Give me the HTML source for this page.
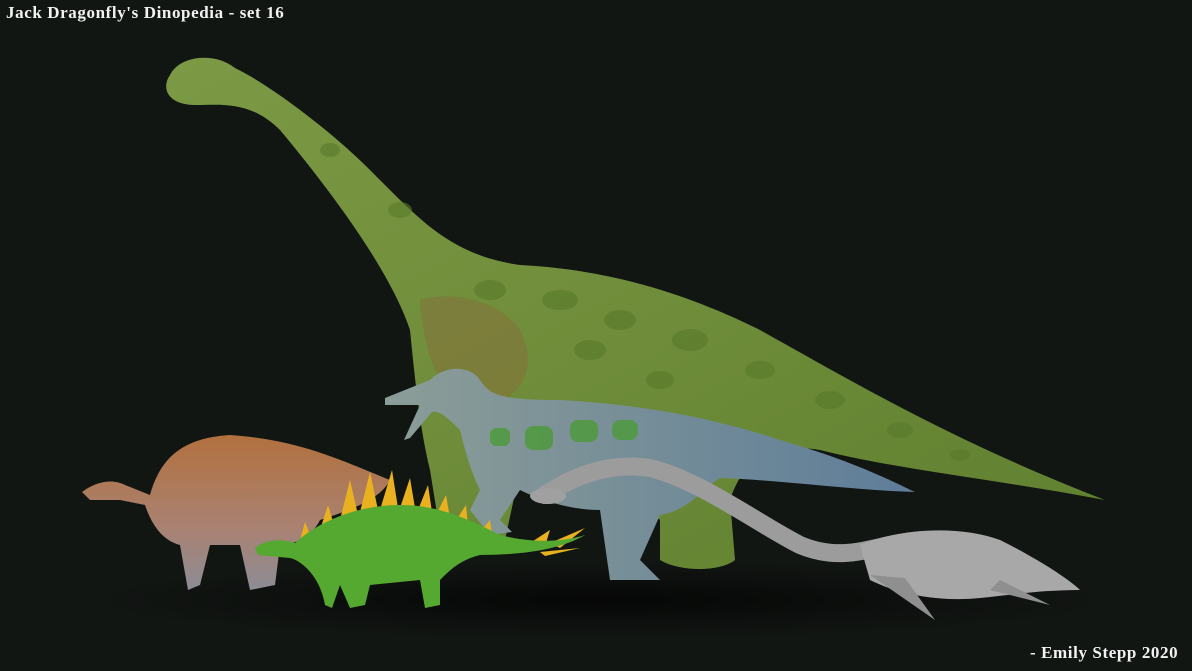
<!DOCTYPE html>
<html><head><meta charset="utf-8"><style>
html,body{margin:0;padding:0;background:#121613;width:1192px;height:671px;overflow:hidden}
svg{position:absolute;left:0;top:0}
.t{position:absolute;color:#f2f2f2;font-family:"Liberation Serif",serif;font-size:17px;letter-spacing:0.6px;font-weight:bold}
</style></head><body>
<svg width="1192" height="671" viewBox="0 0 1192 671">
<defs>
<radialGradient id="shadow" cx="0.5" cy="0.5" r="0.5"><stop offset="0" stop-color="#000" stop-opacity="0.7"/><stop offset="1" stop-color="#000" stop-opacity="0"/></radialGradient>
<linearGradient id="br" x1="0" y1="0" x2="1" y2="1"><stop offset="0" stop-color="#7c9a45"/><stop offset="0.5" stop-color="#6f8d3a"/><stop offset="1" stop-color="#5f8030"/></linearGradient>
<linearGradient id="sp" x1="0" y1="0" x2="1" y2="0"><stop offset="0" stop-color="#8c9d98"/><stop offset="1" stop-color="#5e7d99"/></linearGradient>
<linearGradient id="ou" x1="0" y1="0" x2="0" y2="1"><stop offset="0" stop-color="#b2703e"/><stop offset="0.6" stop-color="#a98272"/><stop offset="1" stop-color="#8d8c95"/></linearGradient>
</defs>
<ellipse cx="600" cy="600" rx="520" ry="40" fill="url(#shadow)"/>
<!-- brachiosaur -->
<path fill="url(#br)" d="M170,75 C180,55 215,52 235,68 C270,85 330,130 370,170 C420,220 450,255 520,265 C620,270 700,300 760,330 C850,380 950,440 1105,500 C1000,480 900,470 820,450 C760,440 740,470 730,500 L735,560 C720,572 680,572 660,560 L660,520 C640,500 600,480 560,470 L520,470 L505,540 C480,552 450,548 440,532 L430,470 C420,430 415,380 410,330 C390,270 330,190 280,130 C250,100 220,105 195,105 C170,105 160,90 170,75 Z"/>
<path fill="#8a6a3a" opacity="0.45" d="M420,300 C450,290 500,300 520,330 C540,370 520,400 480,410 C440,400 425,360 420,300Z"/>
<g fill="#587a2a" opacity="0.6">
<ellipse cx="490" cy="290" rx="16" ry="10"/><ellipse cx="560" cy="300" rx="18" ry="10"/><ellipse cx="620" cy="320" rx="16" ry="10"/><ellipse cx="690" cy="340" rx="18" ry="11"/><ellipse cx="760" cy="370" rx="15" ry="9"/><ellipse cx="830" cy="400" rx="15" ry="9"/><ellipse cx="900" cy="430" rx="13" ry="8"/><ellipse cx="960" cy="455" rx="10" ry="6"/><ellipse cx="400" cy="210" rx="12" ry="8"/><ellipse cx="330" cy="150" rx="10" ry="7"/><ellipse cx="590" cy="350" rx="16" ry="10"/><ellipse cx="660" cy="380" rx="14" ry="9"/></g>
<!-- spinosaur -->
<path fill="url(#sp)" d="M385,398 L430,380 C445,365 470,365 480,380 C490,395 500,400 560,400 C650,405 720,420 780,440 C850,460 890,480 915,492 C850,490 780,480 720,478 C700,490 690,510 660,515 L640,560 L660,580 L610,580 L600,510 C570,510 540,500 520,490 L500,520 L512,532 L490,535 L470,510 L480,490 C470,470 465,450 460,430 C450,420 440,410 432,412 L410,438 L404,440 L420,405 L385,405 Z"/>
<g fill="#4f9a3e" opacity="0.85"><rect x="490" y="428" width="20" height="18" rx="6"/><rect x="525" y="426" width="28" height="24" rx="8"/><rect x="570" y="420" width="28" height="22" rx="8"/><rect x="612" y="420" width="26" height="20" rx="8"/></g>
<!-- ouranosaurus -->
<path fill="url(#ou)" d="M82,492 C95,482 112,478 125,485 L150,495 C160,460 180,438 230,435 C300,440 340,460 390,480 C380,500 350,510 320,520 C310,540 290,545 280,545 L275,585 L250,590 L240,545 L210,545 L200,585 L188,590 L180,545 C160,540 150,520 145,505 L120,500 L90,500 Z"/>
<!-- kentrosaurus spikes -->
<g fill="#e9b020">
<path d="M300,540 L305,522 L312,540Z M320,530 L328,505 L335,528Z M340,520 L350,480 L358,515Z M360,512 L370,472 L378,510Z M380,510 L392,470 L398,508Z M400,508 L410,478 L415,508Z M418,510 L428,485 L432,512Z M436,515 L446,495 L450,518Z M455,522 L466,505 L468,525Z M480,532 L490,520 L492,535Z M530,543 L550,530 L545,546Z M550,543 L585,528 L560,548Z M540,552 L580,548 L545,556Z"/></g>
<path fill="#55a830" d="M255,548 C265,540 280,538 295,543 C320,520 360,505 400,505 C440,505 470,520 500,535 C540,545 570,540 585,535 C560,550 520,555 480,555 C460,560 450,570 440,580 L440,605 L425,608 L420,580 L370,585 L365,605 L350,608 L340,585 L332,608 L325,605 C320,575 300,560 290,558 L258,555 Z"/>
<!-- plesiosaur -->
<path fill="none" stroke="#9c9c9c" stroke-width="18" stroke-linecap="round" d="M545,495 C575,475 610,462 650,468 C700,480 760,525 800,545 C840,562 870,548 900,543"/>
<ellipse cx="548" cy="496" rx="18" ry="8" fill="#a0a0a0"/>
<path fill="#a8a8a8" d="M860,545 C900,528 960,525 1000,540 C1040,560 1070,580 1080,590 C1040,590 1010,595 980,598 C940,602 900,595 870,580Z"/>
<path fill="#8f8f8f" d="M870,575 L935,620 L905,578Z M990,590 L1050,605 L1000,580Z"/>
</svg>
<div class="t" style="left:6px;top:3px">Jack Dragonfly's Dinopedia - set 16</div>
<div class="t" style="left:1030px;top:643px">- Emily Stepp 2020</div>
</body></html>
